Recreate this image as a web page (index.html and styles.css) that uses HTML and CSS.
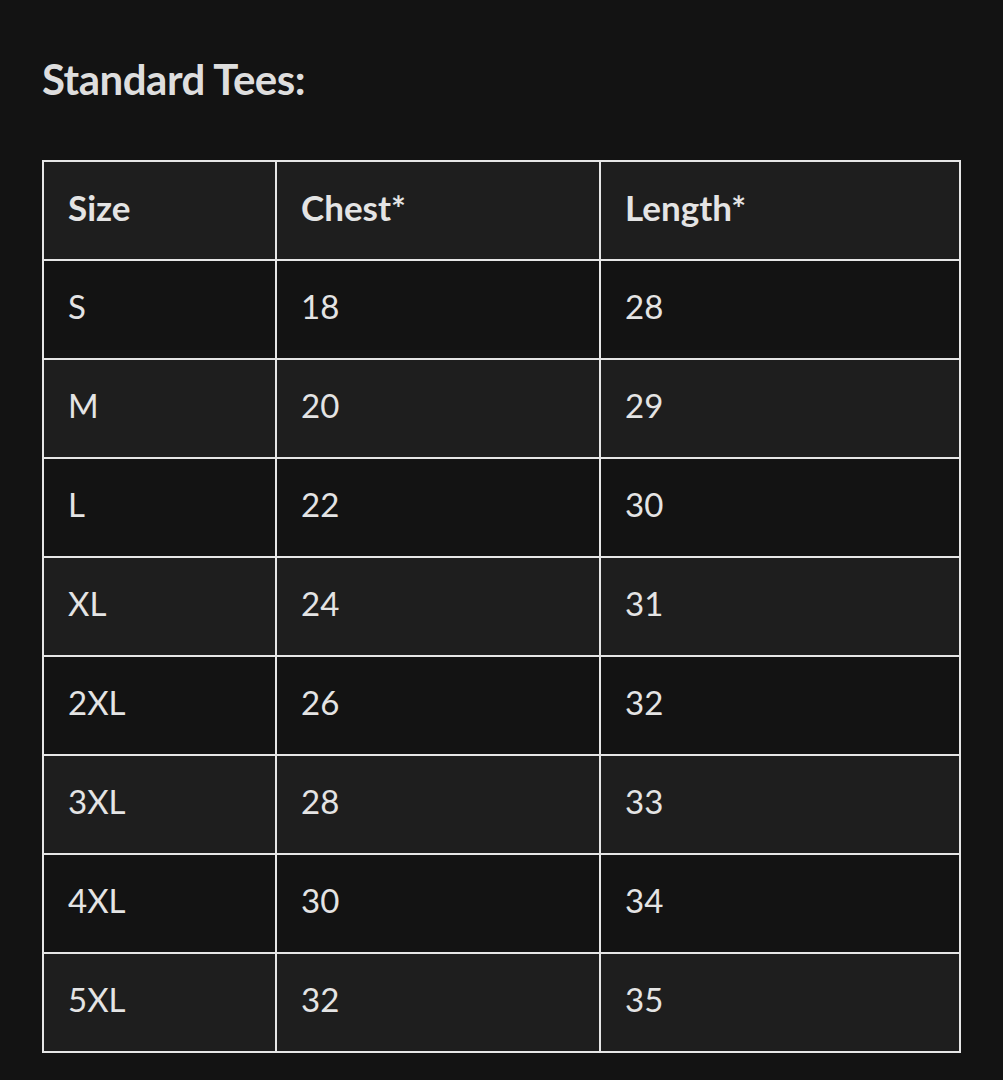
FILE: index.html
```html
<!DOCTYPE html>
<html>
<head>
<meta charset="utf-8">
<link rel="stylesheet" href="styles.css">
</head>
<body>
<div class="page">
  <h2 class="title">Standard Tees:</h2>
  <table class="sizes">
    <colgroup>
      <col class="c1"><col class="c2"><col class="c3">
    </colgroup>
    <thead>
      <tr><th>Size</th><th>Chest*</th><th>Length*</th></tr>
    </thead>
    <tbody>
      <tr><td>S</td><td>18</td><td>28</td></tr>
      <tr><td>M</td><td>20</td><td>29</td></tr>
      <tr><td>L</td><td>22</td><td>30</td></tr>
      <tr><td>XL</td><td>24</td><td>31</td></tr>
      <tr><td>2XL</td><td>26</td><td>32</td></tr>
      <tr><td>3XL</td><td>28</td><td>33</td></tr>
      <tr><td>4XL</td><td>30</td><td>34</td></tr>
      <tr><td>5XL</td><td>32</td><td>35</td></tr>
    </tbody>
  </table>
</div>
</body>
</html>
```
FILE: styles.css
```css
html, body {
  margin: 0;
  padding: 0;
  background: #131313;
}
.page {
  padding: 51px 42px 0 42px;
  font-family: Lato, "Open Sans", sans-serif;
  color: #e4e4e4;
}
.title {
  margin: 0 0 53px 0;
  font-size: 42px;
  line-height: 56px;
  font-weight: 700;
  color: #dedede;
  letter-spacing: -0.5px;
}
.sizes {
  border-collapse: collapse;
  table-layout: fixed;
  width: 917px;
}
.c1 { width: 233px; }
.c2 { width: 324px; }
.c3 { width: 360px; }
.sizes th, .sizes td {
  border: 2px solid #e6e6e6;
  height: 99px;
  padding: 0 0 8px 24px;
  text-align: left;
  font-size: 33px;
  box-sizing: border-box;
}
.sizes th {
  font-weight: 700;
  font-size: 35px;
  background: #1e1e1e;
}
.sizes td {
  font-weight: 400;
}
.sizes tbody tr:nth-child(odd) td { background: #131313; }
.sizes tbody tr:nth-child(even) td { background: #1e1e1e; }
```
